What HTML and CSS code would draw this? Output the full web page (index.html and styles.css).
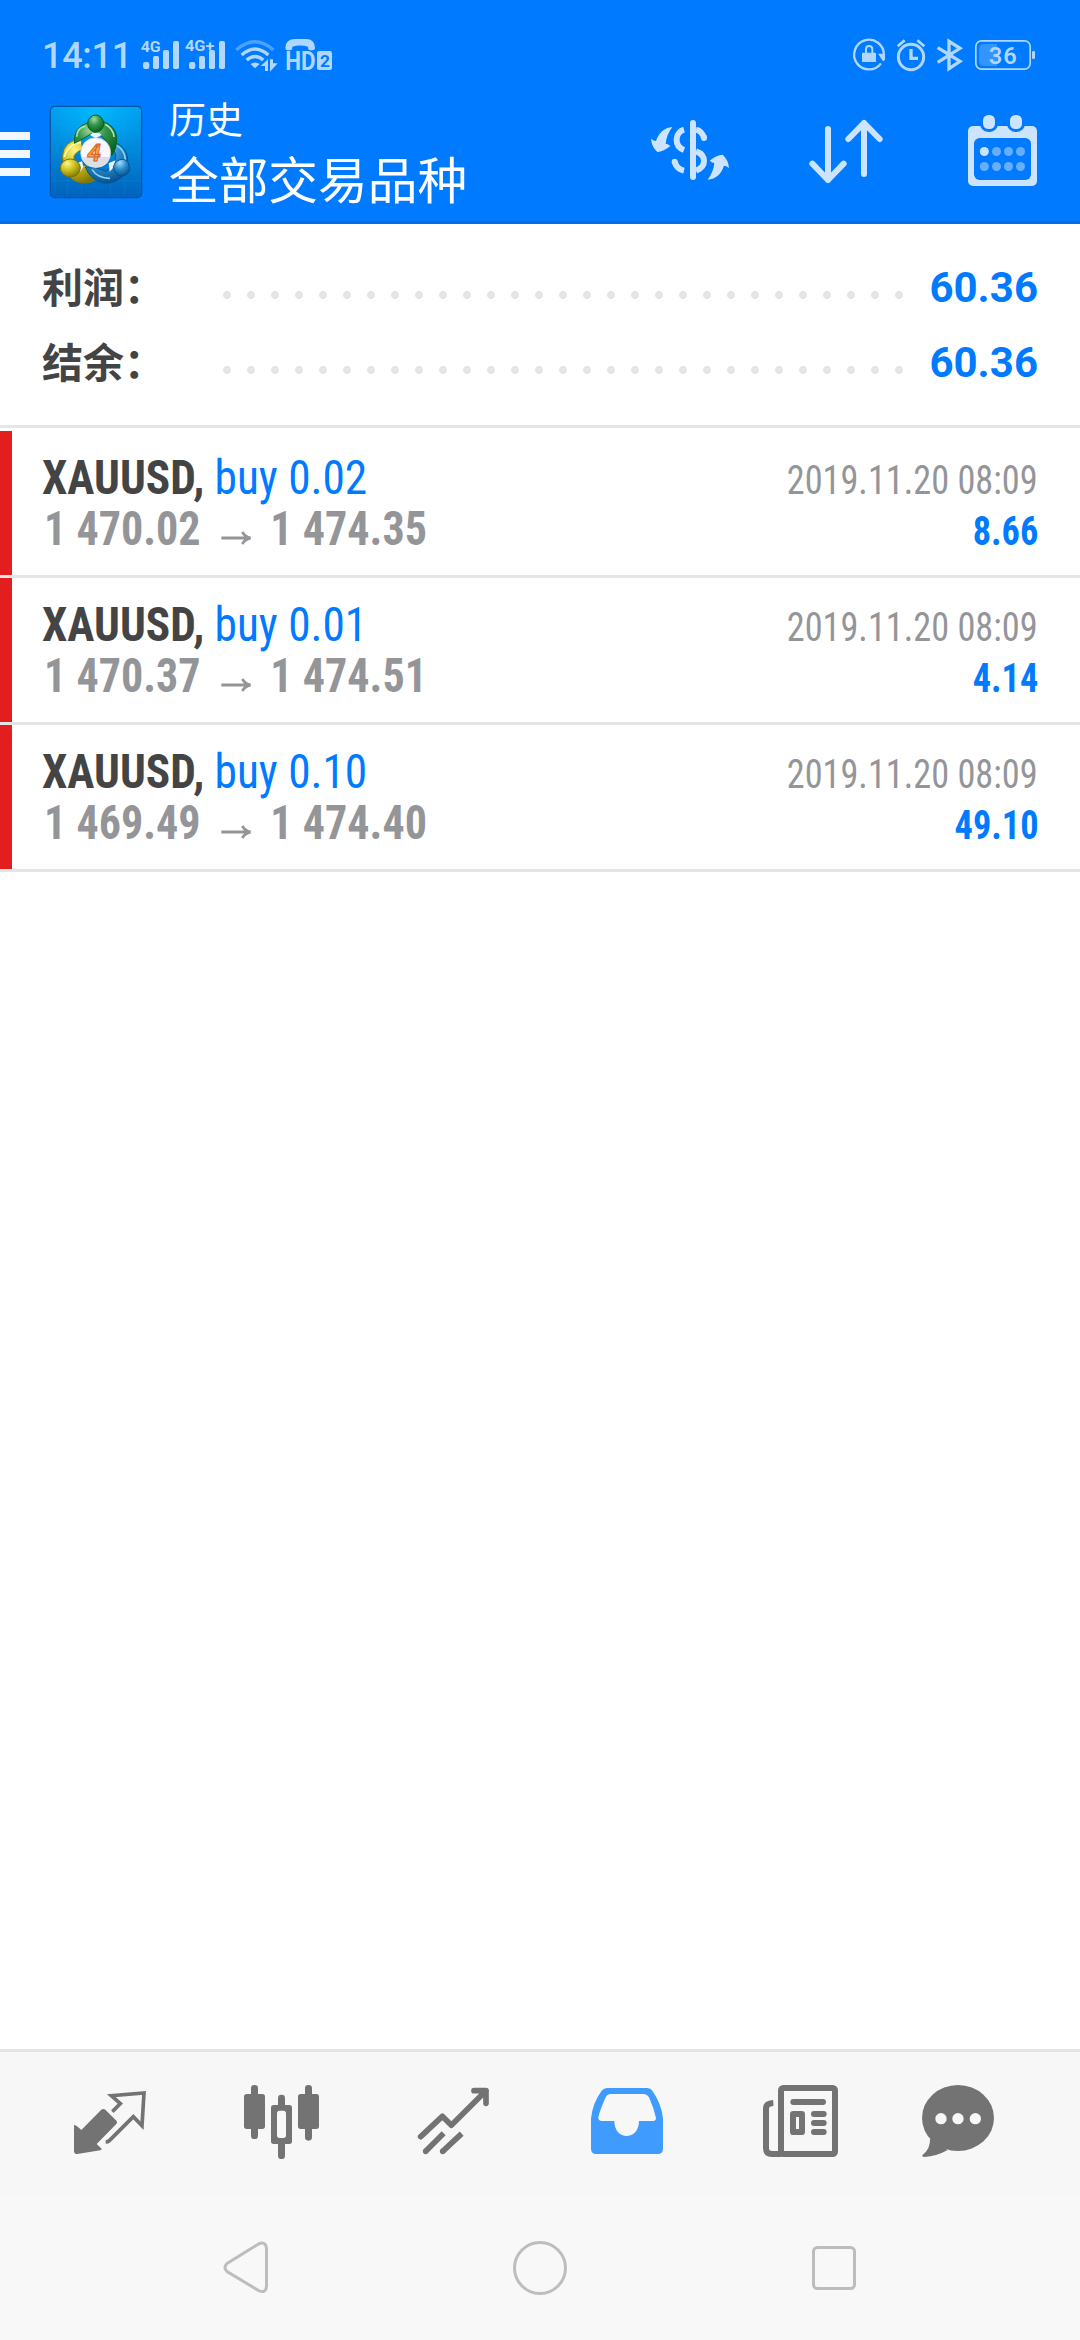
FILE: index.html
```html
<!DOCTYPE html>
<html lang="zh-CN">
<head>
<meta charset="utf-8">
<title>历史</title>
<link rel="stylesheet" href="styles.css">
</head>
<body>
<div class="app">
  <header class="header">
    <div class="status">
      <span class="clock">14:11</span>
      <svg class="status-left" viewBox="414 45 591 120">
        <g fill="#b2d7ff">
          <text x="422" y="95" class="net" textLength="60" lengthAdjust="spacingAndGlyphs">4G</text>
          <text x="555" y="93" class="net" textLength="88" lengthAdjust="spacingAndGlyphs">4G+</text>
          <rect x="429" y="126" width="19" height="21" rx="7"/><rect x="459" y="108" width="18" height="39" rx="5"/><rect x="489" y="90" width="18" height="57" rx="5"/><rect x="519" y="63" width="18" height="84" rx="5"/>
          <rect x="567" y="126" width="19" height="21" rx="7"/><rect x="597" y="108" width="18" height="39" rx="5"/><rect x="627" y="90" width="18" height="57" rx="5"/><rect x="657" y="63" width="18" height="84" rx="5"/>
          <path d="M751 132Q765 123 779 132L765 145Z"/>
          <path d="M804 118L804 153H795V138H782ZM810 118V155L833 130H819V118Z"/>
          <text x="856" y="150" class="hd" textLength="91" lengthAdjust="spacingAndGlyphs">HD</text>
          <path d="M856 84Q857 57 885 57H918Q944 57 945 84Q945 91 938 91H930Q924 90 924 80Q900 73 877 80Q877 90 871 91H863Q856 91 856 84Z"/>
          <rect x="951" y="93" width="45" height="57" rx="7"/>
        </g>
        <g fill="none" stroke="#b2d7ff" stroke-width="10">
          <path d="M709 90Q765 41 820 90" stroke="#4da2ff"/>
          <path d="M725 105Q765 69 805 105M740 120Q765 99 790 120"/>
        </g>
        <text x="960" y="140" class="sim">2</text>
      </svg>
      <svg class="status-right" viewBox="690 45 564 120">
        <g fill="none" stroke="#b2d7ff">
          <path d="M783 130A44.500 44.500 0 1 1 791.500 105" stroke-width="7"/>
          <path d="M738 99V88Q738 78 747 78Q757 78 757 88V99" stroke-width="6"/>
          <circle cx="873" cy="111" r="38" stroke-width="9"/>
          <path d="M873 87V115H894" stroke-width="10"/>
          <path d="M833 79L854 61M892 61L913 79" stroke-width="8"/>
          <path d="M953 83L1020 124L987 146V64L1020 85L953 127" stroke-width="10"/>
          <rect x="1067.500" y="62.500" width="163" height="85" rx="17" stroke-width="5"/>
        </g>
        <g fill="#b2d7ff">
          <rect x="726" y="98" width="42" height="28" rx="2"/><path d="M774 101H795V120L789 124Z"/>
          <path d="M1092 72H1131V138H1092Q1077 138 1077 122V88Q1077 72 1092 72Z" fill="#3395ff"/>
          <rect x="1236" y="93" width="9" height="24" rx="4"/>
          <text x="1106" y="131" class="level" textLength="84">36</text>
        </g>
      </svg>
    </div>
    <div class="toolbar">
      <div class="menu"><i></i><i></i><i></i></div>
      <svg class="logo" viewBox="147 255 282 282">
        <defs>
          <linearGradient id="sky" x1="0" y1="0" x2="0" y2="1"><stop offset="0" stop-color="#00a0f0"/><stop offset=".5" stop-color="#0286d8"/><stop offset="1" stop-color="#0062bd"/></linearGradient>
          <radialGradient id="glow" cx=".5" cy="0" r=".6"><stop offset="0" stop-color="#00bbff"/><stop offset="1" stop-color="#00a8f8" stop-opacity="0"/></radialGradient>
          <radialGradient id="green" cx=".4" cy=".25" r=".75"><stop offset="0" stop-color="#a3dfa0"/><stop offset=".45" stop-color="#36964a"/><stop offset="1" stop-color="#086325"/></radialGradient>
          <radialGradient id="yellow" cx=".35" cy=".25" r=".8"><stop offset="0" stop-color="#fff580"/><stop offset=".5" stop-color="#c8bd20"/><stop offset="1" stop-color="#817600"/></radialGradient>
          <radialGradient id="blue" cx=".4" cy=".2" r=".8"><stop offset="0" stop-color="#a6ddfa"/><stop offset=".5" stop-color="#2a8fce"/><stop offset="1" stop-color="#075291"/></radialGradient>
        </defs>
        <rect x="151" y="259" width="274" height="274" rx="13" fill="url(#sky)"/>
        <rect x="151" y="259" width="274" height="274" rx="13" fill="url(#glow)" stroke="#0757a8" stroke-width="4"/>
        <path d="M202 262V530M245 262V530M331 262V530M374 262V530M154 310H422M154 353H422M154 396H422M154 439H422M154 482H422" stroke="#39b6f5" stroke-opacity=".18" stroke-width="2"/>
        <path d="M244 357Q190 361 187 410L193 444Q211 489 252 489Q280 488 293 472L264 440L229 430Q207 406 247 388Z" fill="url(#yellow)" stroke="#827b0b" stroke-width="3"/>
        <path d="M193 411Q204 371 243 367" fill="none" stroke="#fff8a0" stroke-width="5"/>
        <path d="M341 366Q379 380 383 414Q385 455 367 470Q341 493 310 489Q270 480 256 441L286 443L320 454L343 430Q354 399 337 388Z" fill="url(#blue)" stroke="#075699" stroke-width="3"/>
        <path d="M276 449Q293 475 330 475M347 375Q375 388 376 420" fill="none" stroke="#8ad2f7" stroke-width="5"/>
        <path d="M266 307Q219 322 223 370L246 358L263 348Q284 328 309 352Q325 367 327 400L335 407Q352 384 350 350Q345 316 309 305Z" fill="url(#green)" stroke="#096522" stroke-width="3"/>
        <path d="M230 350Q231 323 257 318M316 313Q341 328 342 351" fill="none" stroke="#b5e3b0" stroke-width="5"/>
        <path d="M270 345L278 338H297L305 345L287 355ZM326 430L346 421L342 440L329 455ZM230 430L246 424L250 440L241 455Z" fill="#eef7ff"/>
        <ellipse cx="287" cy="311" rx="24" ry="26" fill="url(#green)" stroke="#086022" stroke-width="3"/>
        <ellipse cx="211" cy="444" rx="30" ry="27" fill="url(#yellow)" stroke="#797300" stroke-width="3"/>
        <path d="M340 440Q348 417 370 418Q391 422 388 453Q382 466 367 469Q346 467 340 440Z" fill="url(#blue)" stroke="#07558d" stroke-width="3"/>
        <circle cx="287" cy="398" r="45" fill="#f8f8fc" stroke="#bec5ca" stroke-width="2"/>
        <path d="M244 411H330Q323 442 287 442Q252 441 244 411Z" fill="#dedfe6"/>
        <text x="262" y="424" class="four">4</text>
      </svg>
      <div class="titles"><div class="title">历史</div><div class="subtitle">全部交易品种</div></div>
      <svg class="actions" viewBox="75 270 1194 240">
        <g fill="none" stroke="#cce4ff" stroke-width="18" stroke-linecap="round" stroke-linejoin="round">
          <path d="M219 309V471"/><path d="M624 327V480M577 431L624 480L671 431M732 462V309M685 357L732 309L779 357"/>
          <path d="M228 329Q246 333 252 354M164 425Q170 447 192 452M228 394Q252 402 252 423Q252 443 228 452M192 329C164 337 161 378 192 390" stroke-linecap="butt"/>
          <path d="M252 352V354M164 425V426"/>
        </g>
        <g fill="#cce4ff">
          <path id="swap" d="M157 321Q121 324 108 363Q102 363 93 356Q95 381 112 396Q131 395 151 378Q143 371 137 371Q139 345 157 321Z"/>
          <use href="#swap" transform="rotate(180 210 400)"/>
          <rect x="1044" y="318" width="207" height="180" rx="15"/>
        </g>
        <rect x="1062" y="354" width="171" height="126" rx="17" fill="#007aff"/>
        <g fill="#cce4ff" stroke="#007aff" stroke-width="18" paint-order="stroke">
          <rect x="1089" y="285" width="36" height="42" rx="16"/><rect x="1170" y="285" width="36" height="42" rx="16"/>
        </g>
        <g fill="#66afff">
          <circle cx="1093" cy="394.500" r="13.500" fill="#cce4ff"/><circle cx="1129.500" cy="394.500" r="13.500"/><circle cx="1165.500" cy="394.500" r="13.500"/><circle cx="1201.500" cy="394.500" r="13.500"/>
          <circle cx="1093" cy="439.500" r="13.500"/><circle cx="1129.500" cy="439.500" r="13.500"/><circle cx="1165.500" cy="439.500" r="13.500"/><circle cx="1201.500" cy="439.500" r="13.500"/>
        </g>
      </svg>
    </div>
  </header>

  <section class="summary">
    <div class="sum-row"><span class="label">利润：</span><span class="dots"></span><span class="total">60.36</span></div>
    <div class="sum-row"><span class="label">结余：</span><span class="dots"></span><span class="total">60.36</span></div>
  </section>

  <main class="deals">
    <article class="deal">
      <div class="line"><span class="name"><b>XAUUSD,</b> <span class="side">buy 0.02</span></span><span class="date">2019.11.20 08:09</span></div>
      <div class="line"><span class="price">1 470.02<svg class="arrow" viewBox="0 0 33 14"><path d="M0 7H30M23 1Q26 6 32 7Q26 8 23 13"/></svg>1 474.35</span><span class="profit">8.66</span></div>
    </article>
    <article class="deal">
      <div class="line"><span class="name"><b>XAUUSD,</b> <span class="side">buy 0.01</span></span><span class="date">2019.11.20 08:09</span></div>
      <div class="line"><span class="price">1 470.37<svg class="arrow" viewBox="0 0 33 14"><path d="M0 7H30M23 1Q26 6 32 7Q26 8 23 13"/></svg>1 474.51</span><span class="profit">4.14</span></div>
    </article>
    <article class="deal">
      <div class="line"><span class="name"><b>XAUUSD,</b> <span class="side">buy 0.10</span></span><span class="date">2019.11.20 08:09</span></div>
      <div class="line"><span class="price">1 469.49<svg class="arrow" viewBox="0 0 33 14"><path d="M0 7H30M23 1Q26 6 32 7Q26 8 23 13"/></svg>1 474.40</span><span class="profit">49.10</span></div>
    </article>
  </main>

  <nav class="tabs">
    <svg viewBox="-57 36 519 432">
      <path d="M102 255Q106 253 124 270L183 210Q190 204 196 209L230 243Q233 248 229 252L170 312L185 326Q185 330 181 331L112 342Q102 342 102 332Z" fill="#737373"/>
      <path d="M217 215L241 191L214 167L312 159L306 257L280 230L208 302Q204 306 197 306" fill="none" stroke="#737373" stroke-width="11"/>
    </svg>
    <svg viewBox="462 36 519 432" fill="#737373">
      <rect x="633" y="135" width="21" height="162" rx="10"/><rect x="612" y="162" width="63" height="105" rx="8"/>
      <rect x="795" y="135" width="21" height="167" rx="10"/><rect x="774" y="162" width="63" height="105" rx="8"/>
      <rect x="714" y="164" width="21" height="193" rx="10"/><rect x="693" y="195" width="63" height="117" rx="8"/>
      <rect x="711" y="212" width="27" height="82" rx="8" fill="#f7f7f7"/>
    </svg>
    <svg viewBox="981 36 519 432" fill="none" stroke="#737373" stroke-width="17">
      <path d="M1142 290L1207 229L1234 256L1338 152M1302 152H1338V190" stroke-linecap="round" stroke-linejoin="round"/>
      <path d="M1157 334L1211 280M1208 334L1265 281"/><path d="M1157 334V334.010M1208 334V334.010" stroke-linecap="round"/>
    </svg>
    <svg viewBox="-60 36 519 432">
      <path fill="#409bff" fill-rule="evenodd" d="M93 236Q97 190 125 152Q131 144 142 144H262Q272 144 277 152Q305 192 309 236V326Q309 342 293 342H109Q93 342 93 326ZM150 162Q141 163 137 172Q121 208 115 231Q114 242 124 243H163C163 303 237 303 237 243H280Q288 242 288 234Q281 203 267 172Q262 163 252 162Z"/>
    </svg>
    <svg viewBox="459 36 519 432" fill="none" stroke="#737373" stroke-width="18">
      <rect x="663" y="144" width="162" height="198" rx="7"/>
      <path d="M640 189Q618 190 618 205V325Q618 342 636 342H663"/>
      <rect x="699" y="222" width="27" height="54" rx="1"/>
      <path d="M700 186H789M762 222H791M762 249H791M762 276H791" stroke-linecap="round"/>
    </svg>
    <svg viewBox="978 36 519 432" fill="#737373">
      <ellipse cx="1194" cy="234" rx="108" ry="99"/><path d="M1110 296Q1112 325 1087 346Q1086 351 1092 351Q1130 349 1163 330Z"/>
      <g fill="#f7f7f7"><circle cx="1143" cy="236" r="17"/><circle cx="1194" cy="236" r="17"/><circle cx="1246" cy="236" r="17"/></g>
    </svg>
  </nav>
  <nav class="system">
    <svg viewBox="0 0 60 60"><path d="M11 25.500L42.500 6Q49.500 3 50.500 10V48.500Q49.500 56 42.500 52.500L11 33.500Q7 29.500 11 25.500Z"/></svg>
    <svg viewBox="0 0 60 60"><circle cx="30" cy="30" r="25.500"/></svg>
    <svg viewBox="0 0 60 60"><rect x="9.500" y="9.500" width="41" height="41" rx="4"/></svg>
  </nav>
</div>
</body>
</html>
```
FILE: styles.css
```css
* { box-sizing: border-box; }
body { margin: 0; background: #fff; font-family: Roboto, "Noto Sans CJK SC", sans-serif; }
svg { display: block; }
.app { width: 1080px; height: 2340px; display: flex; flex-direction: column; }

.header { height: 224px; background: #007aff; border-bottom: 3px solid #006ee5; color: #fff; }
.status { height: 83px; padding: 35px 42px 0; display: flex; align-items: flex-start; }
.clock { width: 96px; font-size: 36px; line-height: 42px; font-weight: 500; letter-spacing: -0.3px; color: #b2d7ff; }
.status-left { width: 197px; height: 40px; }
.status-right { width: 188px; height: 40px; margin-left: auto; }
.net { font-size: 43px; font-weight: 700; }
.hd { font-size: 76px; font-weight: 700; }
.sim { font-size: 52px; font-weight: 700; fill: #007aff; }
.level { font-size: 71px; font-weight: 600; }
.four { font-size: 74px; font-weight: 700; font-style: italic; fill: #f8a94b; stroke: #d3642d; stroke-width: 3px; }
.toolbar { height: 138px; display: flex; align-items: center; }
.menu { width: 30px; display: flex; flex-direction: column; gap: 10px; padding-top: 4px; }
.menu i { height: 8px; background: #f0f7ff; }
.logo { width: 94px; height: 94px; margin-left: 19px; }
.titles { margin-left: 26px; width: 320px; padding-top: 4px; }
.title { font-size: 37px; line-height: 55px; }
.subtitle { font-size: 49.7px; line-height: 66px; }
.actions { width: 398px; height: 80px; margin: 0 37px 4px auto; }

.summary { height: 204px; padding: 25px 42px 0; border-bottom: 3px solid #e5e5e5; }
.sum-row { height: 75px; display: flex; align-items: center; }
.label { width: 169px; padding-bottom: 3px; font-size: 41px; font-weight: 700; color: #444; }
.dots { width: 696px; height: 24px; margin-top: 16px; background: radial-gradient(circle at 16px 12px, #e5e5e5 3.7px, transparent 4.3px) 0 0 / 24px 24px; }
.total { margin-left: auto; padding-top: 1px; font-size: 42px; font-weight: 700; color: #007aff; }

.deals { flex: 1; padding-top: 3px; }
.deal { height: 147px; padding: 21px 42px 0; box-shadow: inset 12px 0 #e21e1e; border-bottom: 3px solid #e5e5e5; font-stretch: 75%; }
.line { height: 51px; display: flex; justify-content: space-between; align-items: baseline; line-height: 51px; }
.name, .price { font-size: 48px; white-space: nowrap; transform-origin: left; }
.name { transform: scaleX(.944); }
.name b { color: #444; }
.side { color: #007aff; }
.price { margin-left: 1.5px; font-weight: 700; color: #949599; transform: scaleX(.918); }
.arrow { display: inline-block; width: 33px; height: 14px; margin: 0 21px 0 22px; fill: none; stroke: #949599; stroke-width: 3px; }
.date, .profit { font-size: 40px; transform: scaleX(.907); transform-origin: right; }
.date { color: #949599; }
.profit { font-weight: 700; color: #007aff; }

.tabs { height: 147px; background: #f7f7f7; border-top: 3px solid #e5e5e5; padding: 0 21px; display: flex; }
.tabs svg { width: 173px; height: 144px; }
.system { height: 144px; background: #f8f8f8; padding: 0 216px; display: flex; align-items: center; justify-content: space-between; }
.system svg { width: 60px; height: 60px; fill: none; stroke: #bdbdbd; stroke-width: 3px; }
```
